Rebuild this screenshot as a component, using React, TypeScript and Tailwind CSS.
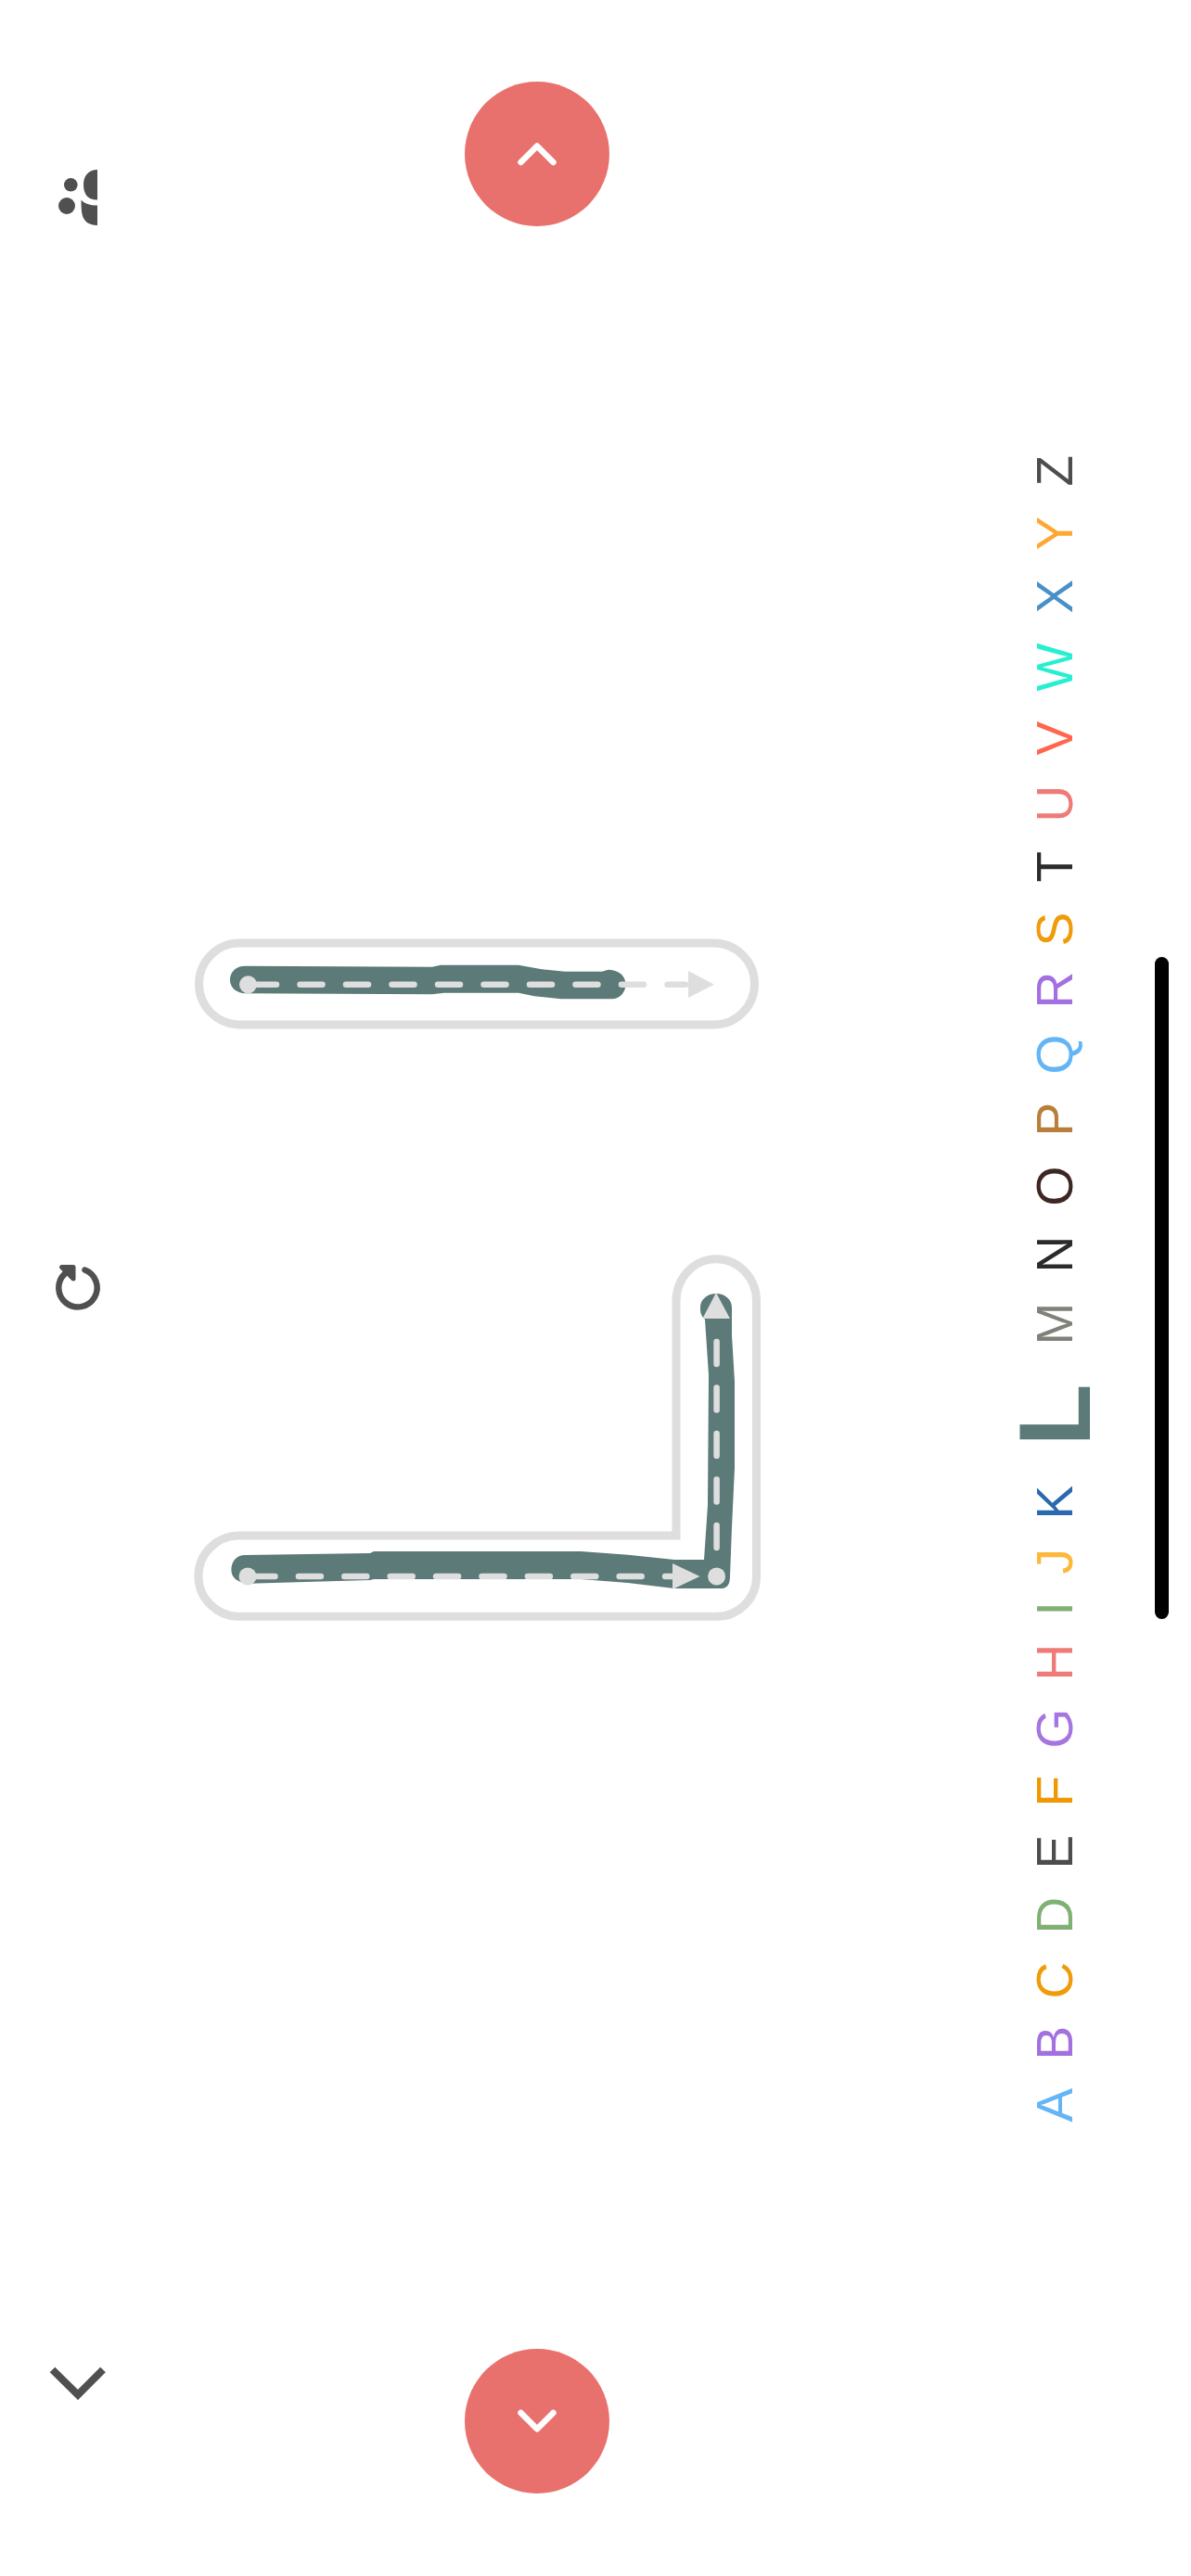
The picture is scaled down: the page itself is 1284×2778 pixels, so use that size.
const letters = [
  { ch: "A", cls: "text-[#64b5f6]" },
  { ch: "B", cls: "text-[#a370e0] mt-[-2px]" },
  { ch: "C", cls: "text-[#f09c0a] mt-[-2px]" },
  { ch: "D", cls: "text-[#7fb074] mt-[-2px]" },
  { ch: "E", cls: "text-[#4d4d4d] mt-[-2px]" },
  { ch: "F", cls: "text-[#f09800] mt-[-2px]" },
  { ch: "G", cls: "text-[#a575e0] mt-[-2px]" },
  { ch: "H", cls: "text-[#ee7b78] mt-[-2px]" },
  { ch: "I", cls: "text-[#7fb074] mt-[-2px]" },
  { ch: "J", cls: "text-[#fdb73a] mt-[-2px]" },
  { ch: "K", cls: "text-[#2a68b0]" },
  { ch: "L", cls: "text-[#5c7a78] !text-[110px] font-bold mt-[10px] mb-[10px]" },
  { ch: "M", cls: "text-[#7f8279]" },
  { ch: "N", cls: "text-[#2b2b2b]" },
  { ch: "O", cls: "text-[#3e2723]" },
  { ch: "P", cls: "text-[#b97f3a]" },
  { ch: "Q", cls: "text-[#64b5f6] mt-[-1px]" },
  { ch: "R", cls: "text-[#a370e0] mt-[-4px]" },
  { ch: "S", cls: "text-[#f09c0a] mt-[-5px]" },
  { ch: "T", cls: "text-[#2b2b2b]" },
  { ch: "U", cls: "text-[#ee7b78]" },
  { ch: "V", cls: "text-[#ff6650]" },
  { ch: "W", cls: "text-[#27efcf]" },
  { ch: "X", cls: "text-[#4a90c8]" },
  { ch: "Y", cls: "text-[#ffa733]" },
  { ch: "Z", cls: "text-[#4d4d4d]" },
]

const RoundButton = ({ up, className }: { up?: boolean; className?: string }) => (
  <button className={`flex h-[156px] w-[156px] items-center justify-center rounded-full bg-[#e9716d] ${className ?? ""}`}>
    <svg width="46" height="28" viewBox="0 0 46 28" fill="none" stroke="#fff" strokeWidth="6.5" strokeLinecap="round" strokeLinejoin="round">
      <path d={up ? "M5.5 23 L23 5.5 L40.5 23" : "M5.5 5 L23 22.5 L40.5 5"} />
    </svg>
  </button>
)

const StraightTrace = () => (
  <svg className="block" width="620" height="110" viewBox="205 1008 620 110" fill="none">
    <rect x="214.5" y="1017" width="599" height="88" rx="44" stroke="#dedede" strokeWidth="9" />
    <path
      fill="#5c7a78"
      d="M264 1041.7 L466 1042.7 L475 1040.7 L559 1040.7 L584 1045.3 L609 1047.7 L649 1047.7 L656 1045.7 C668 1046 674.5 1053 674.5 1061.7 C674.5 1070 668 1077.3 660 1077.3 L605 1077.3 L576 1074.3 L559 1070.7 L479 1070.7 L466 1072.3 L264 1071.3 C255 1071 248 1065 248 1056.7 C248 1048 255 1041.7 264 1041.7 Z"
    />
    <path d="M274 1061.7 L739 1061.7" stroke="#dedede" strokeWidth="6.5" strokeLinecap="round" strokeDasharray="24 25.5" />
    <circle cx="267.5" cy="1061.7" r="9.5" fill="#dedede" />
    <path d="M742 1047 L770 1061.7 L742 1076 Z" fill="#dedede" />
  </svg>
)

const CornerTrace = () => (
  <svg className="block" width="620" height="404" viewBox="205 1350 620 404" fill="none">
    <path
      d="M729 1656 L729 1403 A43 45 0 0 1 815.5 1403 L815.5 1700 A43 43 0 0 1 772 1743.3 L258 1743.3 A44 43.6 0 0 1 258 1656 Z"
      stroke="#dedede"
      strokeWidth="9"
    />
    <path
      fill="#5c7a78"
      d="M264 1677 L399 1675 L403 1673 L626 1673 L677 1676.7 L727 1682 L759 1682 L763 1623 L764 1483 L760 1423 C755 1418 755 1414 755 1410 C755 1401 763 1395 772 1395 C781 1395 789 1401 789 1410 L789 1440 L792 1490 L792 1583 L789 1647 L787 1700 C787 1708 784 1713 778 1713 L727 1713 L677 1707 L626 1703 L403 1703 L399 1704 L268 1707.7 C257 1707 249.4 1702 249.4 1693 C249.4 1684 255 1677 264 1677 Z"
    />
    <path d="M272.5 1700 L727 1700" stroke="#dedede" strokeWidth="6.5" strokeLinecap="round" strokeDasharray="24 25.4" />
    <path d="M772.6 1669 L772.6 1425" stroke="#dedede" strokeWidth="6.5" strokeLinecap="round" strokeDasharray="24 25.5" />
    <circle cx="267" cy="1700" r="9.5" fill="#dedede" />
    <circle cx="772.6" cy="1700" r="9.5" fill="#dedede" />
    <path d="M725 1686 L754.5 1700 L725 1714 Z" fill="#dedede" />
    <path d="M772 1394 L787 1422 L757.4 1422 Z" fill="#dedede" />
  </svg>
)

const App = () => {
  return (
    <div className="flex h-[2778px] w-[1284px] overflow-hidden bg-white [font-family:'Liberation_Sans',sans-serif]">
      {/* left tools */}
      <div className="flex w-[205px] shrink-0 flex-col pl-[30px] pt-[150px]">
        <svg className="block" width="120" height="120" viewBox="30 150 120 120" fill="#505050">
          <circle cx="76.3" cy="199.3" r="7.3" />
          <circle cx="72" cy="222" r="9" />
          <path d="M105 183 C95 183 90 190 90 199 C90 207 93 212 97 214 C100 215.5 103 215.5 105 215.5 Z" />
          <path d="M87.5 215.5 C91 219.5 97 221.5 105 221.5 L105 243 C95 243 90 238 88.5 231 C87.5 226 87.5 220 87.5 215.5 Z" />
        </svg>
        <svg className="mt-[1070px] block" width="120" height="100" viewBox="30 1340 120 100" fill="none" stroke="#505050">
          <path d="M91.5 1369.5 A20.7 20.7 0 1 1 70 1373.5" strokeWidth="6.5" strokeLinecap="round" />
          <path d="M66.5 1366.5 L79 1366.5 L79 1379 Z" fill="#505050" strokeWidth="5" strokeLinejoin="round" />
        </svg>
        <svg className="mt-[1080px] block" width="120" height="100" viewBox="30 2520 120 100" fill="none" stroke="#505050">
          <path d="M56.5 2555.5 L84 2582.5 L111 2555.5" strokeWidth="8" />
        </svg>
      </div>

      {/* tracing area */}
      <div className="flex w-[620px] shrink-0 flex-col pt-[88px]">
        <RoundButton up className="ml-[296px]" />
        <div className="mt-[764px]">
          <StraightTrace />
        </div>
        <div className="mt-[232px]">
          <CornerTrace />
        </div>
        <RoundButton className="ml-[296px] mt-[779px]" />
      </div>

      {/* alphabet */}
      <div className="flex w-[420px] shrink-0 pt-[491px]">
        <div className="ml-[257px] flex rotate-180 items-center gap-[32px] self-start [writing-mode:vertical-rl]">
          {letters.map((l) => (
            <span key={l.ch} className={`text-[55px] leading-none ${l.cls}`}>
              {l.ch}
            </span>
          ))}
        </div>
      </div>

      {/* scrollbar */}
      <div className="mt-[1032px] h-[714px] w-[15px] shrink-0 rounded-full bg-black" />
    </div>
  )
}

export default App
